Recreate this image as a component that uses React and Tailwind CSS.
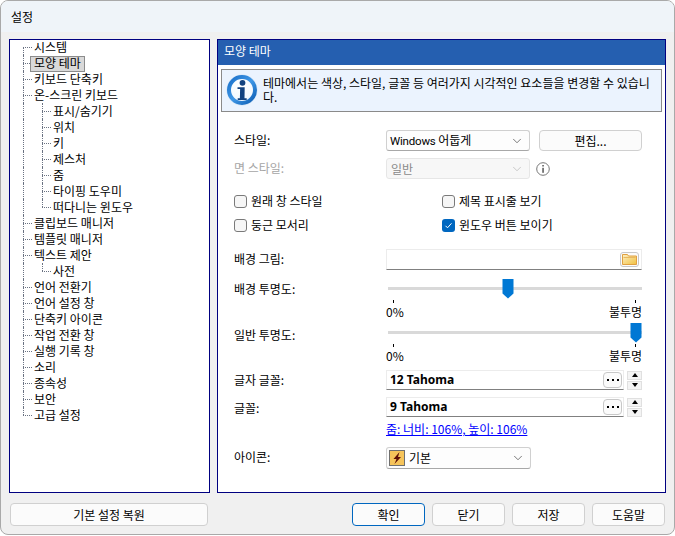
import { ChevronDown } from 'lucide-react';

const font = '[font-family:"Noto_Sans_CJK_KR","Liberation_Sans",sans-serif]';

const treeItems = [
  { label: '시스템' },
  { label: '모양 테마', selected: true },
  { label: '키보드 단축키' },
  { label: '온-스크린 키보드' },
  { label: '표시/숨기기', child: true },
  { label: '위치', child: true },
  { label: '키', child: true },
  { label: '제스처', child: true },
  { label: '줌', child: true },
  { label: '타이핑 도우미', child: true },
  { label: '떠다니는 윈도우', child: true, lastChild: true },
  { label: '클립보드 매니저' },
  { label: '템플릿 매니저' },
  { label: '텍스트 제안' },
  { label: '사전', child: true, lastChild: true },
  { label: '언어 전환기' },
  { label: '언어 설정 창' },
  { label: '단축키 아이콘' },
  { label: '작업 전환 창' },
  { label: '실행 기록 창' },
  { label: '소리' },
  { label: '종속성' },
  { label: '보안' },
  { label: '고급 설정' },
];

function Connector({ half, first }) {
  return (
    <div className="relative h-full w-[10px] shrink-0">
      <div className={`absolute left-0 w-0 border-l border-dotted border-gray-500 ${first ? 'top-[8px] bottom-0' : half ? 'top-0 h-[8px]' : 'top-0 bottom-0'}`} />
      <div className="absolute left-0 top-[8px] h-0 w-[9px] border-t border-dotted border-gray-500" />
    </div>
  );
}

function TreeRow({ item, index, last }) {
  return (
    <div className="flex h-4 items-center pl-[13px]">
      {item.child ? (
        <>
          <div className="h-full w-[19px] shrink-0 border-l border-dotted border-gray-500" />
          <Connector half={item.lastChild} />
          <span className="ml-[1px] whitespace-nowrap text-[12px] leading-[14px] text-black">{item.label}</span>
        </>
      ) : (
        <>
          <Connector half={last} first={index === 0} />
          {item.selected ? (
            <span className="relative -ml-[3px] mt-[1px] h-4 self-start whitespace-nowrap border border-[#8c8c8c] bg-[#d9d9d9] px-[3px] text-[12px] leading-[12px] text-black">{item.label}</span>
          ) : (
            <span className="ml-[1px] whitespace-nowrap text-[12px] leading-[14px] text-black">{item.label}</span>
          )}
        </>
      )}
    </div>
  );
}

function InfoIcon() {
  return (
    <svg width="32" height="32" viewBox="0 0 32 32" className="shrink-0">
      <defs>
        <radialGradient id="infoFill" cx="0.45" cy="0.35" r="0.75">
          <stop offset="0" stopColor="#ffffff" />
          <stop offset="0.7" stopColor="#f4f9fe" />
          <stop offset="1" stopColor="#bcd8f2" />
        </radialGradient>
        <linearGradient id="infoRing" x1="0" y1="0" x2="1" y2="1">
          <stop offset="0" stopColor="#1a6fc9" />
          <stop offset="0.5" stopColor="#3f97e6" />
          <stop offset="1" stopColor="#0c5cb3" />
        </linearGradient>
      </defs>
      <circle cx="16" cy="16" r="15.5" fill="#cfe3f6" />
      <circle cx="16" cy="16" r="13" fill="url(#infoFill)" stroke="url(#infoRing)" strokeWidth="4" />
      <circle cx="16.5" cy="8.8" r="2.9" fill="#12427f" />
      <path d="M11.5 13.2h7.2l-.2 11h2.2v1.8h-9v-1.8h2.2l.2-9.2h-2.6z" fill="#12427f" />
    </svg>
  );
}

function Combo({ children, width, disabled, height = 'h-[21px]' }) {
  return (
    <div className={`flex ${height} ${width} items-center justify-between rounded-[3px] border ${disabled ? 'border-[#e6e6e6] bg-[#f7f7f7] text-[#8a8a8a]' : 'border-[#d0d0d0] border-b-[#a8a8a8] bg-[#fdfdfd] text-black'} pl-[3px] pr-[5px] text-[12px]`}>
      <div className="flex items-center gap-[4px] whitespace-nowrap">{children}</div>
      <ChevronDown size={14} strokeWidth={1.2} className={disabled ? 'text-[#b5b5b5]' : 'text-[#444]'} />
    </div>
  );
}

function Check({ label, checked }) {
  return (
    <div className="flex items-center gap-[4px] text-[12px] text-black">
      {checked ? (
        <span className="flex h-[13px] w-[13px] items-center justify-center rounded-[3px] bg-[#0067c0]">
          <svg width="9" height="9" viewBox="0 0 9 9"><path d="M1.5 4.8l2 2 4-4.5" fill="none" stroke="#fff" strokeWidth="1" /></svg>
        </span>
      ) : (
        <span className="h-[13px] w-[13px] rounded-[3px] border border-[#7a7a7a] bg-[#f6f6f6]" />
      )}
      <span className="whitespace-nowrap">{label}</span>
    </div>
  );
}

function Slider({ value }) {
  return (
    <div className="relative h-[42px] w-[256px]">
      <div className="absolute left-[2px] right-0 top-[8px] h-[3px] bg-[#d9d9d9]" />
      <svg width="12" height="20" viewBox="0 0 12 20" className="absolute top-0" style={{ left: value }}>
        <path d="M0.5 0h11v14.5l-5.5 5-5.5-5z" fill="#0078d4" />
      </svg>
      <div className="absolute left-[7px] top-[21px] h-[3px] w-px bg-black" />
      <div className="absolute right-[6px] top-[21px] h-[3px] w-px bg-black" />
      <div className="absolute left-0 top-[26px] text-[12px] leading-[14px] text-black">0%</div>
      <div className="absolute right-0 top-[26px] text-[12px] leading-[14px] text-black">불투명</div>
    </div>
  );
}

function FontField({ children }) {
  return (
    <div className="flex w-[256px] items-center">
      <div className="flex h-[20px] w-[238px] items-center justify-between border border-[#ececec] border-b-[#808080] bg-white pl-[3px] pr-[1px] font-bold text-black">
        <span className="[font-family:'Noto_Sans',sans-serif] text-[12px] leading-4">{children}</span>
        <span className="flex h-[16px] w-[19px] items-center justify-center gap-[3px] rounded-[4px] border border-[#c8c8c8] bg-[#fbfbfb]">
          <span className="h-[2px] w-[2px] bg-black" />
          <span className="h-[2px] w-[2px] bg-black" />
          <span className="h-[2px] w-[2px] bg-black" />
        </span>
      </div>
      <div className="ml-[3px] flex w-[15px] flex-col gap-[1px]">
        <span className="flex h-[9px] items-center justify-center border border-[#e0e0e0] bg-[#f4f4f4]">
          <span className="h-0 w-0 border-x-[3px] border-b-[4px] border-x-transparent border-b-black" />
        </span>
        <span className="flex h-[9px] items-center justify-center border border-[#e0e0e0] bg-[#f4f4f4]">
          <span className="h-0 w-0 border-x-[3px] border-t-[4px] border-x-transparent border-t-black" />
        </span>
      </div>
    </div>
  );
}

function Row({ label, disabled, className = '', labelClass = '', children }) {
  return (
    <div className={`flex ${className}`}>
      <div className={`w-[152px] shrink-0 text-[12px] ${disabled ? 'text-[#a6a6a6]' : 'text-black'} ${labelClass}`}>{label}</div>
      {children}
    </div>
  );
}

function Btn({ children, width = 'w-[73px]', primary }) {
  return (
    <button className={`flex h-[23px] ${width} items-center justify-center rounded-[4px] border ${primary ? 'border-[#0067c0]' : 'border-[#d0d0d0]'} bg-[#fbfbfb] text-[12px] text-black`}>
      {children}
    </button>
  );
}

export default function App() {
  return (
    <div className={`h-[536px] w-[675px] overflow-hidden bg-white ${font}`}>
      <div className="flex h-[535px] w-[675px] flex-col overflow-hidden rounded-[8px] border border-[#a9a9a9] bg-[#f0f0f0]">
        <div className="flex h-[31px] shrink-0 items-center bg-[#eff4f9] pl-[10px] text-[12px] text-black">설정</div>

        <div className="flex flex-1 flex-col pl-[8px] pr-[8px] pt-[7px]">
          <div className="flex h-[454px] gap-[7px]">
            <div className="w-[201px] shrink-0 border border-[#000080] bg-white">
              <div className="-mt-px">
                {treeItems.map((item, i) => (
                  <TreeRow key={item.label} item={item} index={i} last={i === treeItems.length - 1} />
                ))}
              </div>
            </div>

            <div className="flex flex-1 flex-col border border-[#000080] bg-white">
              <div className="flex h-[25px] shrink-0 items-center bg-[#255fb0] pb-[3px] pl-[6px] text-[12px] text-white">모양 테마</div>

              <div className="mx-[3px] mt-[4px] flex h-[43px] gap-[5px] border border-[#8a8a8a] bg-[#ebf3fe] pl-[4px] pt-[4px]">
                <InfoIcon />
                <p className="pr-[6px] pt-[2px] text-[12px] leading-[14px] text-black">테마에서는 색상, 스타일, 글꼴 등 여러가지 시각적인 요소들을 변경할 수 있습니다.</p>
              </div>

              <div className="pl-[16px] pr-[23px] pt-[18px]">
                <Row label="스타일:" labelClass="pt-[1px]">
                  <Combo width="w-[144px]">
                    <span>
                      <span className="[font-family:'Roboto',sans-serif] text-[11.5px] tracking-[-0.2px]">Windows</span> 어둡게
                    </span>
                  </Combo>
                  <Btn width="w-[103px] ml-[9px] h-[21px]!">편집...</Btn>
                </Row>

                <Row label="면 스타일:" disabled className="mt-[7px]" labelClass="pt-[1px]">
                  <Combo width="w-[144px]" disabled><span className="ml-[1px]">일반</span></Combo>
                  <svg width="14" height="14" viewBox="0 0 14 14" className="ml-[6px] mt-[4px]">
                    <circle cx="7" cy="7" r="6.3" fill="none" stroke="#777" />
                    <rect x="6.3" y="3" width="1.5" height="1.5" fill="#555" />
                    <rect x="6.3" y="5.8" width="1.5" height="5" fill="#555" />
                  </svg>
                </Row>

                <div className="mt-[10px] grid h-[48px] grid-cols-[208px_1fr] items-center">
                  <Check label="원래 창 스타일" />
                  <Check label="제목 표시줄 보기" />
                  <Check label="둥근 모서리" />
                  <Check label="윈도우 버튼 보이기" checked />
                </div>

                <Row label="배경 그림:" className="mt-[12px]" labelClass="pt-[1px]">
                  <div className="flex h-[21px] w-[256px] items-center justify-end border border-[#ececec] border-b-[#808080] bg-white pr-[2px]">
                    <span className="flex h-[15px] w-[19px] items-center justify-center rounded-[3px] border border-[#c8c8c8] bg-[#fbfbfb]">
                      <svg width="15" height="11" viewBox="0 0 15 11">
                        <defs>
                          <linearGradient id="folderFill" x1="0" y1="0" x2="1" y2="1">
                            <stop offset="0" stopColor="#fdf0c4" />
                            <stop offset="1" stopColor="#f0c040" />
                          </linearGradient>
                        </defs>
                        <path d="M0.5 0.5h5l1 1.5h8v8.5h-14z" fill="url(#folderFill)" stroke="#e0a040" />
                        <path d="M1.5 3.5h12" stroke="#e8b860" />
                      </svg>
                    </span>
                  </div>
                </Row>

                <Row label="배경 투명도:" className="mt-[9px]" labelClass="pt-[1px]">
                  <Slider value={116} />
                </Row>

                <Row label="일반 투명도:" className="mt-[2px]" labelClass="pt-[3px]">
                  <Slider value={244} />
                </Row>

                <Row label="글자 글꼴:" className="mt-[5px]" labelClass="pt-px">
                  <FontField>12 Tahoma</FontField>
                </Row>

                <Row label="글꼴:" className="mt-[7px]" labelClass="pt-[2px]">
                  <FontField>9 Tahoma</FontField>
                </Row>

                <Row label="" className="mt-[4px]">
                  <a className="text-[12px] leading-[15px] text-[#0000ff] underline">줌: 너비: 106%, 높이: 106%</a>
                </Row>

                <Row label="아이콘:" className="mt-[11px]" labelClass="pt-[1px]">
                  <Combo width="w-[145px]" height="h-[22px]">
                    <svg width="16" height="16" viewBox="0 0 16 16" className="-ml-[1px]">
                      <rect x="0.5" y="0.5" width="15" height="15" fill="#f6c45a" stroke="#6f6f6f" />
                      <path d="M10.5 2L4.5 9h3L5.5 14l6.5-7H9z" fill="#5e0f06" />
                    </svg>
                    <span>기본</span>
                  </Combo>
                </Row>
              </div>
            </div>
          </div>

          <div className="mt-[10px] flex">
            <Btn width="w-[198px] ml-[1px]">기본 설정 복원</Btn>
            <div className="ml-auto flex gap-[7px] pr-[1px]">
              <Btn primary>확인</Btn>
              <Btn>닫기</Btn>
              <Btn>저장</Btn>
              <Btn>도움말</Btn>
            </div>
          </div>
        </div>
      </div>
    </div>
  );
}
